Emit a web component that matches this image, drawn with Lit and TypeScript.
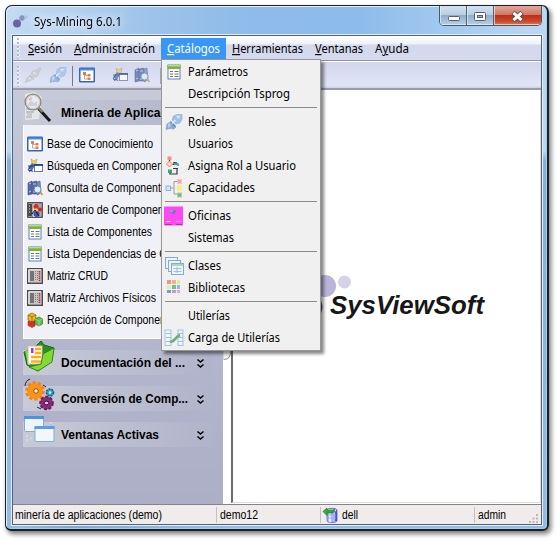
import { LitElement, html, svg, css } from "lit";
import { customElement, property } from "lit/decorators.js";

/** A run of text fitted to a fixed advance width; `mnemonic` is the index of the underlined letter. */
@customElement("fit-text")
class FitText extends LitElement {
  @property() text = "";
  @property({ type: Number }) w = 10;
  @property({ type: Number }) mnemonic = -1;
  static styles = css`
    :host { display: block; flex: none; }
    svg { display: block; overflow: visible; }
    text { fill: currentColor; white-space: pre; }
    .u { text-decoration: underline; }
  `;
  render() {
    const m = this.mnemonic;
    const t = this.text;
    return html`<svg width=${this.w} height="16">
      ${m < 0
        ? svg`<text x="0" y="12" textLength=${this.w} lengthAdjust="spacingAndGlyphs">${t}</text>`
        : svg`<text x="0" y="12" textLength=${this.w} lengthAdjust="spacingAndGlyphs">${t.slice(0, m)}<tspan class="u">${t[m]}</tspan>${t.slice(m + 1)}</text>`}
    </svg>`;
  }
}

const icons: Record<string, unknown> = {
  sheet: svg`<rect x="2" y="1" width="12" height="14" fill="#fff" stroke="#5d83a8"/><rect x="1.5" y="1" width="13" height="4" fill="#7fb13c"/><rect x="2" y="1" width="12" height="1.4" fill="#b9dc86"/><path d="M4 7.5h3M8.5 7.5h4M4 10h3M8.5 10h4M4 12.5h3M8.5 12.5h4" stroke="#64748c" stroke-width="1.1"/>`,
  plug: svg`<path d="M0 15.500l1-5.500 3-2 2 1 4 4-2 2-4-.500z" fill="#87abd8" stroke="#7d9fcb" stroke-width=".6"/><path d="M7.500 2L11 .500h5V5l-2 4-4 1-4-4z" fill="#a3c1e6" stroke="#86a7d3" stroke-width=".6"/><path d="M4.500 7.500l5 5" stroke="#5885c4" stroke-width="1.400"/><path d="M6 9.500l3.500-3.500" stroke="#e6eefa" stroke-width="1.400"/><path d="M10 2l5-.500L12 5z" fill="#d4e3f5"/><path d="M2 10l2-1 1 3-3 2z" fill="#b7cfec"/>`,
  plugoff: svg`<path d="M0 15.500l2-5 4-2 1-4 5-2 3-2 1 1-2 4-1 3-4 2-3 3z" fill="#c9c9cb" stroke="#babac2" stroke-width=".7"/><path d="M4 8l5 5M7 5l5 5" stroke="#b4b4b8"/><path d="M8 5l3 3M4 11l2 1" stroke="#e3e3e6" stroke-width="1.600"/>`,
  tree: svg`<rect x=".75" y="1.25" width="14.5" height="13.5" rx=".5" fill="#fff" stroke="#2e67bb" stroke-width="1.5"/><path d="M1 2.5h14" stroke="#4a8cdf" stroke-width="2"/><path d="M5.500 7v5h3M5.500 8.500h3" fill="none" stroke="#b9a9a2"/><path d="M4 5h3v3H4zM8.500 7h3v2.500h-3zM8.500 10.500h3V13h-3z" fill="#ec793d"/>`,
  search: svg`<path d="M4 1l3 2 3-2-1 5H5z" fill="#ecd35b" stroke="#a79032" stroke-width=".5"/><path d="M1 10l4-5 3 2-3 6z" fill="#4a70c4"/><rect x="7.5" y="6.5" width="8" height="7" fill="#fff" stroke="#6f7b94"/><path d="M7 7h9" stroke="#243f91" stroke-width="1.8"/><path d="M1 8h6M2 14c2-2 3-2 4 0M4 8l-3 4 4 1" stroke="#333b68" fill="none"/>`,
  books: svg`<path d="M1 3l4-2v13l-4 1zM5.5 2l4-1v13h-4z" fill="#566bab" stroke="#3d4a82" stroke-width=".6"/><path d="M10 2l3-1 1 12-4 2z" fill="#7d8dca" stroke="#46538e" stroke-width=".6"/><path d="M2 4l2-1M6 4h3M2 12l2-1M6 12h3" stroke="#bdcaf2"/><circle cx="10.5" cy="9.5" r="3.5" fill="#d6f1f7" stroke="#6a8696"/><path d="M13 12l2.5 3" stroke="#c9a031" stroke-width="1.8"/>`,
  inventory: svg`<rect x=".7" y=".7" width="14.6" height="14.6" fill="#a9a9a9" stroke="#333"/><rect x="1" y="2" width="4" height="12" fill="#4b4b4b"/><path d="M2 4h1M2 7h1M2 10h1" stroke="#eee"/><path d="M6 15V3l2-2v14z" fill="#ddd"/><circle cx="9" cy="4.5" r="2.6" fill="#e22a22"/><circle cx="13" cy="7.5" r="2" fill="#d32525"/><circle cx="9.500" cy="12" r="3" fill="#3e53c7"/><circle cx="9" cy="8" r="1.8" fill="#f2cf42"/><path d="M5 12l3-4 4 6" stroke="#111" fill="none"/>`,
  matrix: svg`<rect x=".7" y=".7" width="14.6" height="14.6" fill="#c9c5c5" stroke="#4b4b4b" stroke-width="1.4"/><path d="M1.8 14V1.8H14" fill="none" stroke="#f1f1f1"/><path d="M3 4h4M3 6h4M3 8h4M3 10h4M3 12h4" stroke="#222" stroke-width="1.2"/><path d="M8.5 3v10M10.5 3v10" stroke="#8b8282" stroke-dasharray="1 1"/><path d="M12.5 3v10" stroke="#b6262d" stroke-width="1.6" stroke-dasharray="1.4 .8"/>`,
  cubes: svg`<path d="M1 3l4-2 4 2v5l-4 2-4-2z" fill="#edb91b" stroke="#8b6210" stroke-width=".7"/><path d="M1 3l4 2 4-2M5 5v5" stroke="#8b6210" stroke-width=".7" fill="none"/><path d="M1 9l4 1 3-1v5l-3 1.5-4-2z" fill="#dc3027" stroke="#9d211a" stroke-width=".5"/><path d="M8 7l4-2 3.5 2v5L12 14l-4-2z" fill="#60bd55" stroke="#2e742e" stroke-width=".7"/><path d="M8 7l4 2 3.5-2M12 9v5" fill="none" stroke="#a9e59f" stroke-width=".7"/>`,
  role: svg`<path d="M3.500 2v2M4 14.500v1.500h7v-4.500M6.500 6.500H8v-2h3M11 11.500v-1H7" fill="none" stroke="#34393b" stroke-width="1.200"/><path d="M9 10.500h3" stroke="#34393b"/><rect x="1.500" y="-1.500" width="4" height="3.500" fill="#f68d8d"/><path d="M3.500 3l3 3-3 3-3-3z" fill="#fde0c9" stroke="#ee855b"/><rect x="2" y="11.500" width="4" height="3.500" fill="#34a476"/><path d="M8 6.500l2-2.500 3 2v2z" fill="#4298ba"/>`,
  capacity: svg`<path d="M5 8h2.500M11 1.500H8V14h3" fill="none" stroke="#9a9a9a"/><rect x="0" y="6" width="4.5" height="4.5" fill="#d5e8fb" stroke="#87b4df"/><rect x="11.500" y="-.5" width="4" height="4" fill="#f4a5a5" stroke="#f9c3c3"/><rect x="11.500" y="6" width="4" height="4" fill="#f9f25b" stroke="#f8ec9b"/><rect x="11.500" y="13" width="4" height="4" fill="#7ab87a" stroke="#a9d1a9"/>`,
  office: svg`<rect x="-2" y="-1.500" width="19" height="19" fill="#ff48f5"/><path d="M4 2.500h6v1.500H9V6H6.500V4.500H4z" fill="#4f8a9c"/><path d="M4 3h3" stroke="#77d2dd"/><path d="M0 13.500h5" stroke="#f8e078"/><path d="M10 13.500h5" stroke="#d8a0d0"/><path d="M-1 16.500h7M10 16.500h6" stroke="#a53e83"/>`,
  classes: svg`<g stroke="#82acd2" fill="#e9f4fd"><rect x="-.5" y="-.5" width="12" height="11"/><rect x="2.500" y="2.500" width="12" height="11"/><rect x="5.500" y="5.500" width="12" height="11"/></g><path d="M6 7h11" stroke="#a1cb97" stroke-width="1.5"/><path d="M7.500 10.500h8M7.500 13.500h8M11 9v6" stroke="#a9bfd6"/>`,
  library: svg`<path d="M1 0h4v4H1z" fill="#f69087"/><path d="M6 0h4v4H6z" fill="#f5ae89"/><path d="M11 0h3v4h-3z" fill="#f4e196"/><path d="M1 5h4v4H1z" fill="#dfedbb"/><path d="M6 5h4v4H6z" fill="#62ca89"/><path d="M11 5h3v4h-3z" fill="#82bdee"/><path d="M1 10h4v3H1z" fill="#8598c5"/><path d="M6 10h4v3H6z" fill="#df8fc3"/><path d="M11 10h3v3h-3z" fill="#efa1cf"/>`,
  load: svg`<g fill="#edf5fb" stroke="#a3c3df"><rect x="-1" y="0" width="6" height="15.500"/><rect x="12" y="0" width="5" height="15.500"/></g><path d="M0 3.500h5M0 7.500h5M0 11.500h5M12 3.500h5M12 7.500h5M12 11.500h5" stroke="#9fc3c9"/><path d="M4 12l3-1 5-5 2-1" fill="none" stroke="#6fad78" stroke-width="2.600"/>`,
  db: svg`<path d="M4 3h10v11c-1 2-9 2-10 0z" fill="#aeb5fb" stroke="#545fd4" stroke-width=".8"/><path d="M7 5v10" stroke="#eff1ff" stroke-width="2"/><path d="M13 4v10" stroke="#3b40d2" stroke-width="1.600"/><path d="M5 8h8M5 11h8" stroke="#9aa2f0"/><ellipse cx="9" cy="3" rx="5" ry="1.700" fill="#e4e7ff" stroke="#6872d5"/><path d="M0 4.500L4 1v2h6l2-1-2 4H4v2.500z" fill="#35ad30" stroke="#187f1c" stroke-width=".7"/>`,
  logo: svg`<circle cx="4" cy="9.500" r="4" fill="#6865a6"/><circle cx="9" cy="4" r="2.700" fill="#8d91c2"/><circle cx="13" cy="3" r="1.700" fill="#b0c1e3"/>`,
};
const bigIcons: Record<string, unknown> = {
  magnifier: svg`<path d="M2 2l9-2 8 5-3 22-14 1z" fill="#e4e5e8"/><path d="M3 17h7M3 20h8M3 25h6" stroke="#b4b7bb" stroke-width="1.500"/><rect x="4" y="21" width="5" height="4" fill="#cacbcd"/><circle cx="10" cy="10" r="7.800" fill="#e6ebf3" stroke="#8b8a88" stroke-width="1.600"/><circle cx="10" cy="10" r="6.700" fill="none" stroke="#d8cfbb" stroke-width="1.200"/><path d="M5 12l3-4 3 3 3-2v5H5z" fill="#ccd1dd"/><path d="M6 8l3-2" stroke="#f1b4ad" stroke-width="1.600"/><path d="M15.500 16.500L27 29" stroke="#191919" stroke-width="3"/><path d="M15.500 16l4 4" stroke="#8e8371" stroke-width="2"/>`,
  docs: svg`<path d="M1 10l6-2L13 4l5-5 3 4 10 3-3 13-13 10L4 23z" fill="#28901f" stroke="#17621b"/><path d="M2 9h5v14H5z" fill="#7ed72f"/><rect x="5" y="4" width="14" height="18" fill="#fffdf2" stroke="#c2c0a3"/><path d="M12 7h6M12 11h6M8 15h10M8 19.500h10" stroke="#ffae13" stroke-width="2.500"/><rect x="8" y="6" width="2.500" height="5" fill="#a33bdb"/><path d="M20 12l11-6-2 14-14 9-9-4 12-3z" fill="#85d832" stroke="#2c8b22"/>`,
  gears: svg`<circle cx="12" cy="13" r="8" fill="#ff9215"/><circle cx="12" cy="13" r="8.500" fill="none" stroke="#f08712" stroke-width="2.600" stroke-dasharray="3.200 2.140"/><circle cx="13" cy="13" r="2.200" fill="#fff" stroke="#8b4d10"/><circle cx="27" cy="14.500" r="3.600" fill="#2aa5ce" stroke="#145d7a" stroke-width="1.500" stroke-dasharray="2 1"/><circle cx="27" cy="14.500" r="1.200" fill="#d8f4ff"/><circle cx="23.500" cy="25" r="6.300" fill="#8e2b78" stroke="#6b2060" stroke-width="2" stroke-dasharray="3 1.600"/><ellipse cx="23.500" cy="25" rx="2.500" ry="1.800" fill="#d4c8df" stroke="#391037"/><path d="M2 8c0-3 2-6 5-7M14 29l4 2M20 7l3 2" stroke="#252525" fill="none"/>`,
  windows: svg`<rect x="1.500" y="2.500" width="19" height="15" rx="1" fill="#f1f4fb" stroke="#81add8"/><rect x="1" y="2" width="20" height="3" fill="#4994e6"/><rect x="12" y="12.500" width="19" height="15" rx="1" fill="#f4f6fa" stroke="#81add8"/><rect x="11.500" y="12" width="20" height="3" fill="#5a9ee9"/><path d="M4 21v6M7 25l2-1M27 9l4-1" stroke="#e3e7ef" stroke-dasharray="2 2"/>`,
};
const icon = (n: string, cls = "ic") => html`<svg class=${cls} viewBox="0 0 16 16">${icons[n]}</svg>`;

const menuBar: [string, number, number][] = [
  ["Sesión", 34, 0], ["Administración", 81, 0], ["Catálogos", 53, 0],
  ["Herramientas", 71, 0], ["Ventanas", 48, 0], ["Ayuda", 34, 1],
];
const menuItems: ([string, number, string] | null)[] = [
  ["Parámetros", 60, "sheet"], ["Descripción Tsprog", 102, ""], null,
  ["Roles", 28, "plug"], ["Usuarios", 45, ""], ["Asigna Rol a Usuario", 108, "role"], ["Capacidades", 67, "capacity"], null,
  ["Oficinas", 43, "office"], ["Sistemas", 46, ""], null,
  ["Clases", 33, "classes"], ["Bibliotecas", 57, "library"], null,
  ["Utilerías", 42, ""], ["Carga de Utilerías", 92, "load"],
];
const tasks: [string, number, string][] = [
  ["Base de Conocimiento", 106, "tree"], ["Búsqueda en Componentes", 130, "search"],
  ["Consulta de Componentes", 125, "books"], ["Inventario de Componentes", 131, "inventory"],
  ["Lista de Componentes", 105, "sheet"], ["Lista Dependencias de C...", 129, "sheet"],
  ["Matriz CRUD", 61, "matrix"], ["Matriz Archivos Físicos", 109, "matrix"],
  ["Recepción de Componentes", 133, "cubes"],
];
const groups: [string, number, string][] = [
  ["Documentación del ...", 124, "docs"], ["Conversión de Comp...", 127, "gears"], ["Ventanas Activas", 98, "windows"],
];

@customElement("app-root")
class AppRoot extends LitElement {
  static styles = css`
    * { box-sizing: border-box; }
    :host { display: block; box-sizing: border-box; width: 558px; height: 541px; padding: 5px 9px 9px 5px; background: #fff; overflow: hidden; position: relative; font: 12px "Noto Sans", "Open Sans", sans-serif; color: #000; }
    .window { height: 526px; width: 544px; border: 1px solid #1b2026; border-bottom-width: 2px; border-right-width: 2px; border-radius: 7px 7px 6px 6px; padding: 0 5px 5px 6px; display: flex; flex-direction: column;
      box-shadow: inset 1px 1px 0 #e2f0fc, inset -1px -1px 0 #9ad3ee, 2px 3px 5px #0008;
      background: linear-gradient(90deg, #0000 15px, #7299c599 60px, #7299c500 200px) 0 100% / 100% 8px no-repeat, linear-gradient(90deg, #c4dbf2, #9dc3ea 27%, #8ebbe9 45%, #8dbbea 65%, #a5cbf0 83%, #bed8f2) 0 0 / 100% 34px no-repeat, linear-gradient(#bed5ee 34px, #bed5ee 145px, #85afd9 155px, #94bce3); }
    .title { height: 29px; flex: none; display: flex; align-items: flex-start; }
    .title .logo { width: 16px; height: 16px; margin: 8px 0 0 1px; }
    .title fit-text { margin: 8px 0 0 5px; filter: drop-shadow(0 0 4px #fff) drop-shadow(0 0 5px #fff8); }
    .caption { display: flex; margin-left: auto; width: 103px; height: 20px; border: 1px solid #4b5967; border-top: 0; border-radius: 0 0 5px 5px; overflow: hidden; }
    .cb { width: 28px; border-right: 1px solid #526271; background: linear-gradient(#d3e3f3, #b8cee4 45%, #91adca 50%, #b6d0e9); box-shadow: inset 1px -1px 0 #e9f3fcaa; }
    .cb.mid { width: 27px; }
    .cb.close { width: 48px; border: 0; background: linear-gradient(#e3a99b, #d27764 45%, #bb301b 50%, #cc482a 80%, #dd7d58); }
    .cb svg { display: block; width: 100%; height: 19px; }
    .client { height: 490px; flex: none; border: 1px solid #51617b; box-shadow: 0 0 0 1px #e1effb; display: flex; flex-direction: column; background: #fff; }
    .menubar { height: 25px; flex: none; display: flex; background: linear-gradient(#fff, #eef1f9 8px, #d4d8ec 9px, #d6daee); border-bottom: 1px solid #92949b; padding: 2px 0 0 4px; }
    .grip { flex: none; width: 3px; height: 21px; background: radial-gradient(circle at 1px 1px, #b9bccb 1px, #fff 1.300px, #fff0 2px) 0 0 / 3px 4px; }
    .mb { padding: 3px 6px 0; height: 21px; }
    .grip + .mb { margin-left: 2px; }
    .mb.on { background: #3796fa; color: #fff; }
    .toolbar { height: 29px; flex: none; display: flex; align-items: flex-start; padding: 4px 0 0 4px; border-top: 1px solid #fff; border-bottom: 2px solid #9b9baa; background: linear-gradient(#d3d7ed, #e0e4f6 90%, #cdd1e5); }
    .toolbar .ic { margin: 1px 0 0 9px; }
    .toolbar .grip + .ic { margin-left: 5px; }
    .toolbar .ic.near { margin-left: 6px; }
    .toolbar .faded { opacity: .75; }
    .vbar { width: 1px; height: 20px; background: #77798a; margin: 0 -3px 0 6px; }
    .vbar.far { margin-left: 10px; height: 16px; margin-top: 2px; background: #a5a7b5; }
    .gap { width: 8px; }
    .ic { display: block; width: 16px; height: 16px; overflow: visible; flex: none; }
    .body { flex: 1; min-height: 0; display: flex; }
    .side { width: 210px; flex: none; padding: 10px 10px 0; background: linear-gradient(#c7cad9, #b5b8ce 45%, #adafc7); font-family: "Liberation Sans", Arial, sans-serif; }
    .head { height: 25px; display: flex; align-items: flex-start; background: linear-gradient(90deg, #c7cad7, #b1b3ca); font-weight: bold; margin-bottom: 11px; }
    .head.first { margin-bottom: 0; }
    .head fit-text { margin: 5px 0 0 6px; }
    .big { width: 32px; height: 32px; flex: none; margin-top: -8px; overflow: visible; }
    .chev { margin: 8px 8px 0 auto; width: 9px; height: 12px; }
    .list { height: 214px; margin-bottom: 11px; background: #f0f1f6; border: solid #fff; border-width: 0 1px 1px; padding: 8px 0 0 3px; overflow: hidden; }
    .task { height: 22px; display: flex; align-items: center; }
    .task fit-text { margin: 0 0 0 4px; }
    .scroll { width: 8px; flex: none; background: #fff; }
    .thumb { width: 8px; height: 270px; background: #f4f4f4; border: 1px solid #999; border-left-color: #ddd; border-radius: 0 0 7px 0; }
    .mdi { flex: 1; border: solid #6b6b6b; border-width: 0 1px 1px 2px; border-right-color: #ddd; border-bottom-color: #ddd; background: #fff; margin-bottom: 1px; padding: 184px 0 0 83px; }
    .brand { display: block; overflow: visible; width: 180px; height: 50px; }
    .brand text { font: italic bold 26px "Liberation Sans", Arial, sans-serif; fill: #171717; }
    .status { height: 20px; flex: none; display: flex; border-top: 1px solid #858585; background: #efeceb; font-family: "Liberation Sans", Arial, sans-serif; padding-top: 2px; }
    .cell { height: 16px; border-right: 1px solid #c4c2c0; padding-left: 2px; display: flex; flex: none; }
    .c1 { width: 204px; } .c2 { width: 104px; } .c3 { width: 154px; gap: 3px; } .c4 { flex: 1; padding-left: 3px; border: 0; }
    .c2 { padding-left: 3px; }
    .sizer { width: 9px; height: 9px; margin: 7px 3px 0 auto; }
    .menu { position: absolute; left: 161px; top: 59px; width: 160px; height: 292px; background: #f0f0f0; border: 1px solid #979797; padding: 1px 0 0 4px; box-shadow: 3px 3px 3px #0007; }
    .item { height: 22px; display: flex; align-items: center; }
    .item fit-text { margin: 0 0 0 6px; }
    .slot { width: 16px; flex: none; }
    .rule { height: 6px; padding: 2px 3px 0 0; margin-left: -1px; }
    .rule div { height: 1px; background: #8b8b8b; }
  `;

  private head(label: string, w: number, pic: string, first = false) {
    return html`<div class="head ${first ? "first" : ""}">
      <svg class="big" viewBox="0 0 32 32">${bigIcons[pic]}</svg>
      <fit-text text=${label} w=${w}></fit-text>
      ${first ? "" : html`<svg class="chev" viewBox="0 0 9 12"><path d="M1.500 1.500l3 2.500 3-2.500M1.500 6.500l3 2.500 3-2.500" fill="none" stroke="#000" stroke-width="1.500"/></svg>`}
    </div>`;
  }

  render() {
    return html`
      <div class="window">
        <div class="title">
          ${icon("logo", "logo")}
          <fit-text text="Sys-Mining 6.0.1" w="88"></fit-text>
          <div class="caption">
            <div class="cb"><svg><rect x="8.500" y="10.500" width="11" height="4" rx="1" fill="#fff" stroke="#555e6b"/></svg></div>
            <div class="cb mid"><svg><rect x="7.500" y="6.500" width="11" height="8" rx="1" fill="#fff" stroke="#555e6b"/><rect x="10.500" y="9.500" width="5" height="2" fill="#9bb3cc" stroke="#555e6b"/></svg></div>
            <div class="cb close"><svg><path d="M19 6.500l9 8M28 6.500l-9 8" stroke="#5d4b50" stroke-width="5"/><path d="M19.500 6.900l8 7.200M27.500 6.900l-8 7.200" stroke="#fff" stroke-width="3"/></svg></div>
          </div>
        </div>
        <div class="client">
          <div class="menubar">
            <div class="grip"></div>
            ${menuBar.map(([t, w, m], i) => html`<div class="mb ${i === 2 ? "on" : ""}"><fit-text text=${t} w=${w} mnemonic=${m}></fit-text></div>`)}
          </div>
          <div class="toolbar">
            <div class="grip"></div>
            ${icon("plugoff", "ic faded")}${icon("plug", "ic faded")}
            <div class="vbar"></div>
            ${icon("tree")}<div class="gap"></div>${icon("search", "ic faded")}${icon("books", "ic faded near")}
            <div class="vbar far"></div>
          </div>
          <div class="body">
            <div class="side">
              ${this.head("Minería de Aplicaciones", 138, "magnifier", true)}
              <div class="list">
                ${tasks.map(([t, w, i]) => html`<div class="task">${icon(i)}<fit-text text=${t} w=${w}></fit-text></div>`)}
              </div>
              ${groups.map(([t, w, i]) => this.head(t, w, i))}
            </div>
            <div class="scroll"><div class="thumb"></div></div>
            <div class="mdi">
              <svg class="brand"><circle cx="9" cy="12" r="11" fill="#bab4da"/><circle cx="28.500" cy="8" r="6.500" fill="#d6d2e7"/><circle cx="-6" cy="33" r="12.500" fill="#55517e"/><text x="14" y="39.500" textLength="154" lengthAdjust="spacingAndGlyphs">SysViewSoft</text></svg>
            </div>
          </div>
          <div class="status">
            <div class="cell c1"><fit-text text="minería de aplicaciones (demo)" w="147"></fit-text></div>
            <div class="cell c2"><fit-text text="demo12" w="38"></fit-text></div>
            <div class="cell c3">${icon("db")}<fit-text text="dell" w="16"></fit-text></div>
            <div class="cell c4"><fit-text text="admin" w="28"></fit-text>
              <svg class="sizer"><path d="M7 0h2v2H7zM3.500 3.500h2v2h-2zM7 3.500h2v2H7zM0 7h2v2H0zM3.500 7h2v2h-2zM7 7h2v2H7z" fill="#bcb9b7"/></svg>
            </div>
          </div>
        </div>
      </div>
      <div class="menu">
        ${menuItems.map((m) => m
          ? html`<div class="item">${m[2] ? icon(m[2]) : html`<div class="slot"></div>`}<fit-text text=${m[0]} w=${m[1]}></fit-text></div>`
          : html`<div class="rule"><div></div></div>`)}
      </div>`;
  }
}
